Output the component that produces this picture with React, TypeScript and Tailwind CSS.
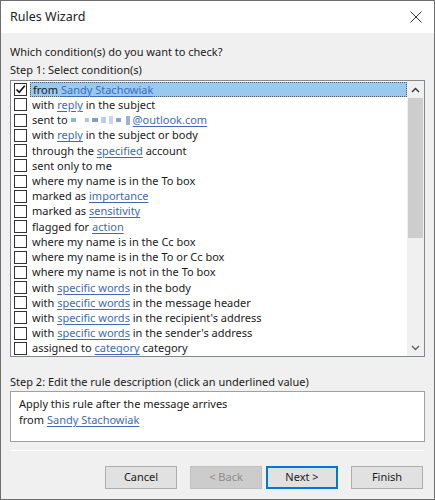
import React from "react";

type Part = string | { link: string };

const conditions: Part[][] = [
  ["from ", { link: "Sandy Stachowiak" }],
  ["with ", { link: "reply" }, " in the subject"],
  ["sent to "],
  ["with ", { link: "reply" }, " in the subject or body"],
  ["through the ", { link: "specified" }, " account"],
  ["sent only to me"],
  ["where my name is in the To box"],
  ["marked as ", { link: "importance" }],
  ["marked as ", { link: "sensitivity" }],
  ["flagged for ", { link: "action" }],
  ["where my name is in the Cc box"],
  ["where my name is in the To or Cc box"],
  ["where my name is not in the To box"],
  ["with ", { link: "specific words" }, " in the body"],
  ["with ", { link: "specific words" }, " in the message header"],
  ["with ", { link: "specific words" }, " in the recipient's address"],
  ["with ", { link: "specific words" }, " in the sender's address"],
  ["assigned to ", { link: "category" }, " category"],
];

function Link({ children }: { children: React.ReactNode }) {
  return <span className="text-[#3d6bb8] underline underline-offset-2">{children}</span>;
}

function Censored() {
  // blurred address blocks
  return (
    <span className="inline-flex items-center gap-[3px] mr-[3px]">
      <span className="w-[5px] h-[4px] bg-[#8fb4e0]" />
      <span className="w-[4px] h-[4px] bg-[#a9c3e3] ml-[6px]" />
      <span className="w-[6px] h-[4px] bg-[#7f9fc7]" />
      <span className="w-[5px] h-[6px] bg-[#b9cfe9]" />
      <span className="w-[4px] h-[8px] bg-[#c8d8ec]" />
      <span className="w-[5px] h-[4px] bg-[#8aa6cc]" />
      <span className="w-[4px] h-[9px] bg-[#9ab3d8] ml-[2px]" />
    </span>
  );
}

function Row({ parts, index }: { parts: Part[]; index: number }) {
  const selected = index === 0;
  return (
    <div className="flex items-center h-[15.3px] leading-[14px]">
      <div className="w-[13px] h-[13px] ml-[3px] mr-[3px] border border-[#333] bg-white flex items-center justify-center shrink-0">
        {selected && (
          <svg width="11" height="11" viewBox="0 0 11 11">
            <path d="M1.5 5.5 L4.2 8.3 L9.8 1.8" stroke="#111" strokeWidth="1.6" fill="none" />
          </svg>
        )}
      </div>
      <div
        className={`flex-1 h-full flex items-center pl-[2px] whitespace-nowrap ${
          selected ? "bg-[#99c9ef] border border-dotted border-[#555]" : ""
        }`}
      >
        {parts.map((p, i) =>
          typeof p === "string" ? <span key={i} className="whitespace-pre">{p}</span> : <Link key={i}>{p.link}</Link>
        )}
        {index === 2 && (
          <>
            <Censored />
            <Link>@outlook.com</Link>
          </>
        )}
      </div>
    </div>
  );
}

function Btn({ label, variant }: { label: string; variant?: "disabled" | "default" }) {
  const cls =
    variant === "disabled"
      ? "bg-[#cccccc] border-[#bfbfbf] text-[#8d8d8d]"
      : variant === "default"
      ? "bg-[#e1e1e1] border-[#0078d7] border-2"
      : "bg-[#e1e1e1] border-[#adadad]";
  return (
    <div className={`w-[72px] h-[23px] border flex items-center justify-center ${cls}`}>{label}</div>
  );
}

export default function App() {
  return (
    <div
      className="w-[435px] h-[500px] bg-[#f0f0f0] border border-[#6e6e6e] flex flex-col text-[11px] text-[#1a1a1a] overflow-hidden"
      style={{ fontFamily: '"Noto Sans", "Open Sans", sans-serif' }}
    >
      <div className="h-[32px] bg-white flex items-center justify-between pl-[9px] pr-[12px] shrink-0">
        <span className="text-[12.5px] text-[#222]">Rules Wizard</span>
        <svg width="12" height="12" viewBox="0 0 12 12">
          <path d="M0.5 0.5 L11.5 11.5 M11.5 0.5 L0.5 11.5" stroke="#333" strokeWidth="1" />
        </svg>
      </div>

      <div className="flex flex-col px-[9px] pt-[10px]">
        <div className="h-[18px] leading-[18px]">Which condition(s) do you want to check?</div>
        <div className="h-[18px] leading-[18px]">Step 1: Select condition(s)</div>

        <div className="mt-[1px] h-[277px] bg-white border border-[#828790] flex">
          <div className="flex-1 flex flex-col pt-[1px]">
            {conditions.map((c, i) => (
              <Row key={i} parts={c} index={i} />
            ))}
          </div>
          <div className="w-[17px] bg-[#f0f0f0] flex flex-col">
            <div className="h-[17px] flex items-center justify-center">
              <svg width="9" height="6" viewBox="0 0 9 6">
                <path d="M1 5 L4.5 1.5 L8 5" stroke="#333" strokeWidth="1.4" fill="none" />
              </svg>
            </div>
            <div className="h-[140px] mx-[1px] bg-[#cdcdcd]" />
            <div className="flex-1" />
            <div className="h-[17px] flex items-center justify-center">
              <svg width="9" height="6" viewBox="0 0 9 6">
                <path d="M1 1 L4.5 4.5 L8 1" stroke="#606060" strokeWidth="1.4" fill="none" />
              </svg>
            </div>
          </div>
        </div>

        <div className="mt-[16px] h-[18px] leading-[18px]">
          Step 2: Edit the rule description (click an underlined value)
        </div>
        <div className="h-[51px] bg-white border border-[#a0a0a0] px-[8px] pt-[4px] leading-[15.5px]">
          <div>Apply this rule after the message arrives</div>
          <div>
            from <Link>Sandy Stachowiak</Link>
          </div>
        </div>

        <div className="mt-[8px] h-[1px] bg-[#a0a0a0] border-b border-white mx-[1px]" />

        <div className="flex justify-end gap-[13px] mt-[15px] pr-[2px]">
          <Btn label="Cancel" />
          <div className="flex gap-[4px]">
            <Btn label="< Back" variant="disabled" />
            <Btn label="Next >" variant="default" />
          </div>
          <Btn label="Finish" />
        </div>
      </div>
    </div>
  );
}
